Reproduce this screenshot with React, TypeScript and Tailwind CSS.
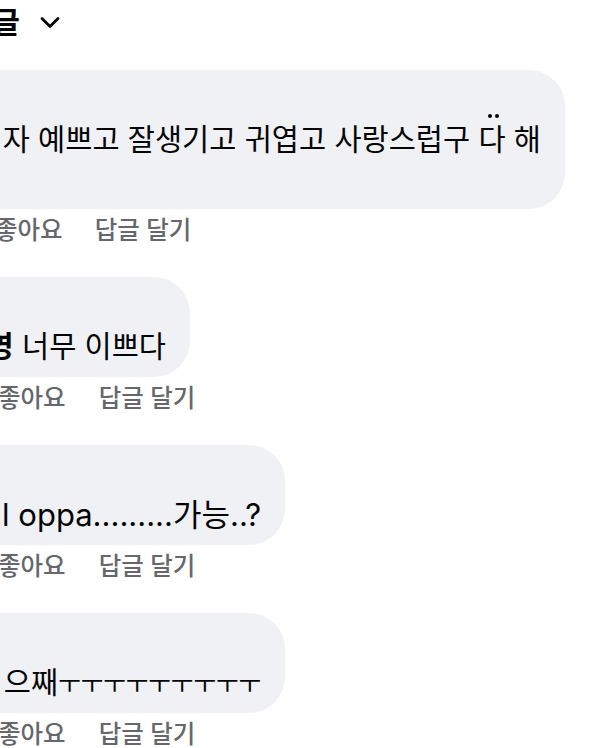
const font = { fontFamily: 'Inter, "Noto Sans CJK KR", "Noto Sans", sans-serif' };

type Comment = {
  name: string;
  lead?: string;
  text: string;
  tail?: string;
  extra?: string;
  width: string;
  size: string;
  actions: string;
  dots?: boolean;
};

function Bubble({ c }: { c: Comment }) {
  return (
    <div className={`-ml-[100px] rounded-[36px] bg-[#f0f1f5] py-[11px] pl-[24px] pr-[24px] ${c.width}`}>
      <div className="h-[39px] overflow-hidden whitespace-nowrap text-[26px] font-semibold leading-[39px] text-[#050505]">
        {c.name}
      </div>
      <div className={`h-[39px] whitespace-nowrap text-right leading-[39px] text-[#050505] ${c.size}`}>
        {c.lead && <span className="font-bold">{c.lead}</span>}
        {c.text}
        {c.dots && (
          <>
            <span className="relative">
              다
              <span className="absolute -top-[7px] left-[10px] flex gap-[3px]">
                <span className="h-[4px] w-[4px] rounded-full bg-[#050505]" />
                <span className="h-[4px] w-[4px] rounded-full bg-[#050505]" />
              </span>
            </span>{" "}
            해
          </>
        )}
        {c.tail && <span className="text-[24.5px]">{c.tail}</span>}
      </div>
      {c.extra && (
        <div className="h-[39px] overflow-hidden whitespace-nowrap text-[29.5px] leading-[39px] text-[#050505]">
          {c.extra}
        </div>
      )}
    </div>
  );
}

const comments: Comment[] = [
  {
    name: "민지",
    text: "여자 예쁘고 잘생기고 귀엽고 사랑스럽구 ",
    extra: "줘",
    width: "w-[665px]",
    size: "text-[29.5px]",
    actions: "-ml-[5px] gap-[32px]",
    dots: true,
  },
  { name: "수아", lead: "지영", text: " 너무 이쁘다", width: "w-[290px]", size: "text-[29.5px]", actions: "-ml-[2px] gap-[33px]" },
  { name: "하은", text: "우리 l oppa.........가능..?", width: "w-[385px]", size: "text-[31px]", actions: "-ml-[2px] gap-[33px]" },
  { name: "서연", text: "으째", tail: "ㅜㅜㅜㅜㅜㅜㅜㅜㅜ", width: "w-[385px]", size: "text-[29.5px]", actions: "-ml-[2px] gap-[33px]" },
];

export default function App() {
  return (
    <div className="h-[748px] w-[615px] overflow-hidden bg-white" style={font}>
      <div className="-ml-[98px] flex h-[44px] items-center">
        <span className="whitespace-nowrap text-[30px] font-semibold leading-none text-[#050505]">모든 댓글</span>
        <svg className="ml-[19px] h-[22px] w-[22px]" viewBox="0 0 22 22" fill="none">
          <path d="M3 7.5 11 15.5 19 7.5" stroke="#050505" strokeWidth="2.8" strokeLinecap="round" strokeLinejoin="round" />
        </svg>
      </div>

      <div className="mt-[26px] flex flex-col gap-[32px]">
        {comments.map((c, i) => (
          <div key={i}>
            <Bubble c={c} />
            <div className={`mt-[6px] flex h-[30px] items-center whitespace-nowrap text-[24.5px] font-medium leading-[30px] text-[#65676b] ${c.actions}`}>
              <span>좋아요</span>
              <span>답글 달기</span>
            </div>
          </div>
        ))}
      </div>
    </div>
  );
}
